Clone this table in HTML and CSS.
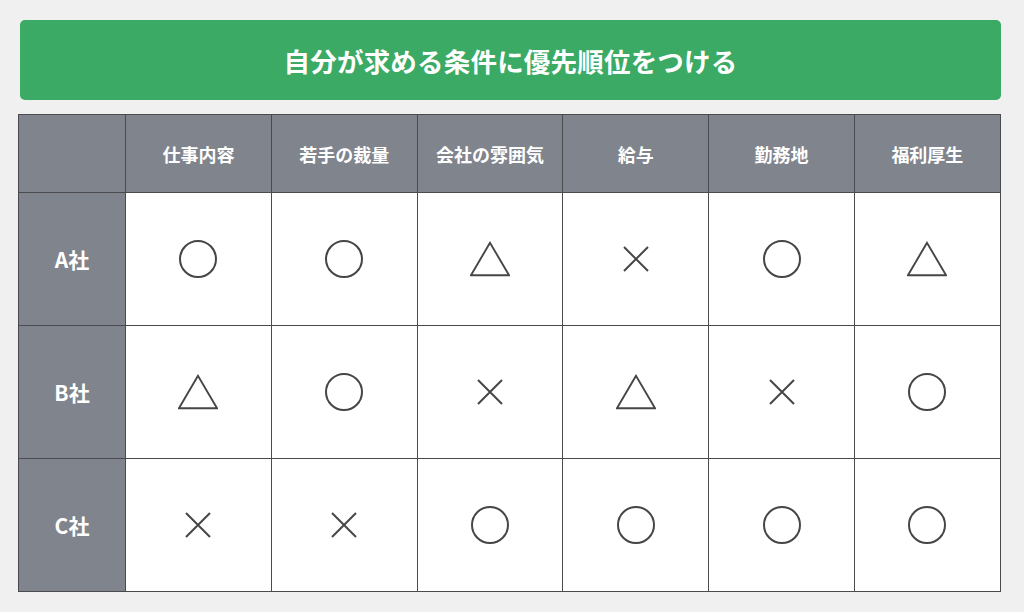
FILE: index.html
```html
<!DOCTYPE html>
<html lang="ja">
<head>
<meta charset="utf-8">
<link rel="stylesheet" href="styles.css">
</head>
<body>
<div class="page">
  <div class="title">自分が求める条件に優先順位をつける</div>
  <div class="table">
    <div class="cell head"></div>
    <div class="cell head">仕事内容</div>
    <div class="cell head">若手の裁量</div>
    <div class="cell head">会社の雰囲気</div>
    <div class="cell head">給与</div>
    <div class="cell head">勤務地</div>
    <div class="cell head">福利厚生</div>

    <div class="cell label">A社</div>
    <div class="cell"><svg class="sym" viewBox="0 0 40 40"><circle cx="20" cy="20" r="18"/></svg></div>
    <div class="cell"><svg class="sym" viewBox="0 0 40 40"><circle cx="20" cy="20" r="18"/></svg></div>
    <div class="cell"><svg class="sym" viewBox="0 0 42 40"><polygon points="21,3 1,37 41,37"/></svg></div>
    <div class="cell"><svg class="sym" viewBox="0 0 40 40"><path d="M8 8 L32 32 M32 8 L8 32"/></svg></div>
    <div class="cell"><svg class="sym" viewBox="0 0 40 40"><circle cx="20" cy="20" r="18"/></svg></div>
    <div class="cell"><svg class="sym" viewBox="0 0 42 40"><polygon points="21,3 1,37 41,37"/></svg></div>

    <div class="cell label">B社</div>
    <div class="cell"><svg class="sym" viewBox="0 0 42 40"><polygon points="21,3 1,37 41,37"/></svg></div>
    <div class="cell"><svg class="sym" viewBox="0 0 40 40"><circle cx="20" cy="20" r="18"/></svg></div>
    <div class="cell"><svg class="sym" viewBox="0 0 40 40"><path d="M8 8 L32 32 M32 8 L8 32"/></svg></div>
    <div class="cell"><svg class="sym" viewBox="0 0 42 40"><polygon points="21,3 1,37 41,37"/></svg></div>
    <div class="cell"><svg class="sym" viewBox="0 0 40 40"><path d="M8 8 L32 32 M32 8 L8 32"/></svg></div>
    <div class="cell"><svg class="sym" viewBox="0 0 40 40"><circle cx="20" cy="20" r="18"/></svg></div>

    <div class="cell label">C社</div>
    <div class="cell"><svg class="sym" viewBox="0 0 40 40"><path d="M8 8 L32 32 M32 8 L8 32"/></svg></div>
    <div class="cell"><svg class="sym" viewBox="0 0 40 40"><path d="M8 8 L32 32 M32 8 L8 32"/></svg></div>
    <div class="cell"><svg class="sym" viewBox="0 0 40 40"><circle cx="20" cy="20" r="18"/></svg></div>
    <div class="cell"><svg class="sym" viewBox="0 0 40 40"><circle cx="20" cy="20" r="18"/></svg></div>
    <div class="cell"><svg class="sym" viewBox="0 0 40 40"><circle cx="20" cy="20" r="18"/></svg></div>
    <div class="cell"><svg class="sym" viewBox="0 0 40 40"><circle cx="20" cy="20" r="18"/></svg></div>
  </div>
</div>
</body>
</html>
```
FILE: styles.css
```css
html, body {
  margin: 0;
  padding: 0;
  background: #f0f0f0;
}
body {
  font-family: "Noto Sans CJK JP", "Noto Sans", sans-serif;
  width: 1024px;
  height: 612px;
  overflow: hidden;
}
.page {
  padding: 20px 0 0 18px;
  width: 984px;
  display: flex;
  flex-direction: column;
  gap: 14px;
}
.title {
  margin-left: 2px;
  width: 981px;
  height: 80px;
  box-sizing: border-box;
  background: #3baa64;
  border-radius: 5px;
  color: #fff;
  font-size: 26.5px;
  font-weight: 700;
  letter-spacing: 0.2px;
  display: flex;
  align-items: center;
  justify-content: center;
}
.table {
  display: grid;
  grid-template-columns: 106px repeat(6, 144.8px);
  grid-template-rows: 77px 132px 132px 132px;
  gap: 1px;
  background: #4b4b4d;
  border: 1px solid #4b4b4d;
  width: 981px;
}
.cell {
  background: #fff;
  display: flex;
  align-items: center;
  justify-content: center;
}
.head {
  background: #80848c;
  color: #fff;
  font-size: 18px;
  font-weight: 700;
}
.label {
  background: #80848c;
  color: #fff;
  font-size: 21px;
  font-weight: 700;
}
.sym {
  width: 40px;
  height: 40px;
  fill: none;
  stroke: #464646;
  stroke-width: 2;
}
```
